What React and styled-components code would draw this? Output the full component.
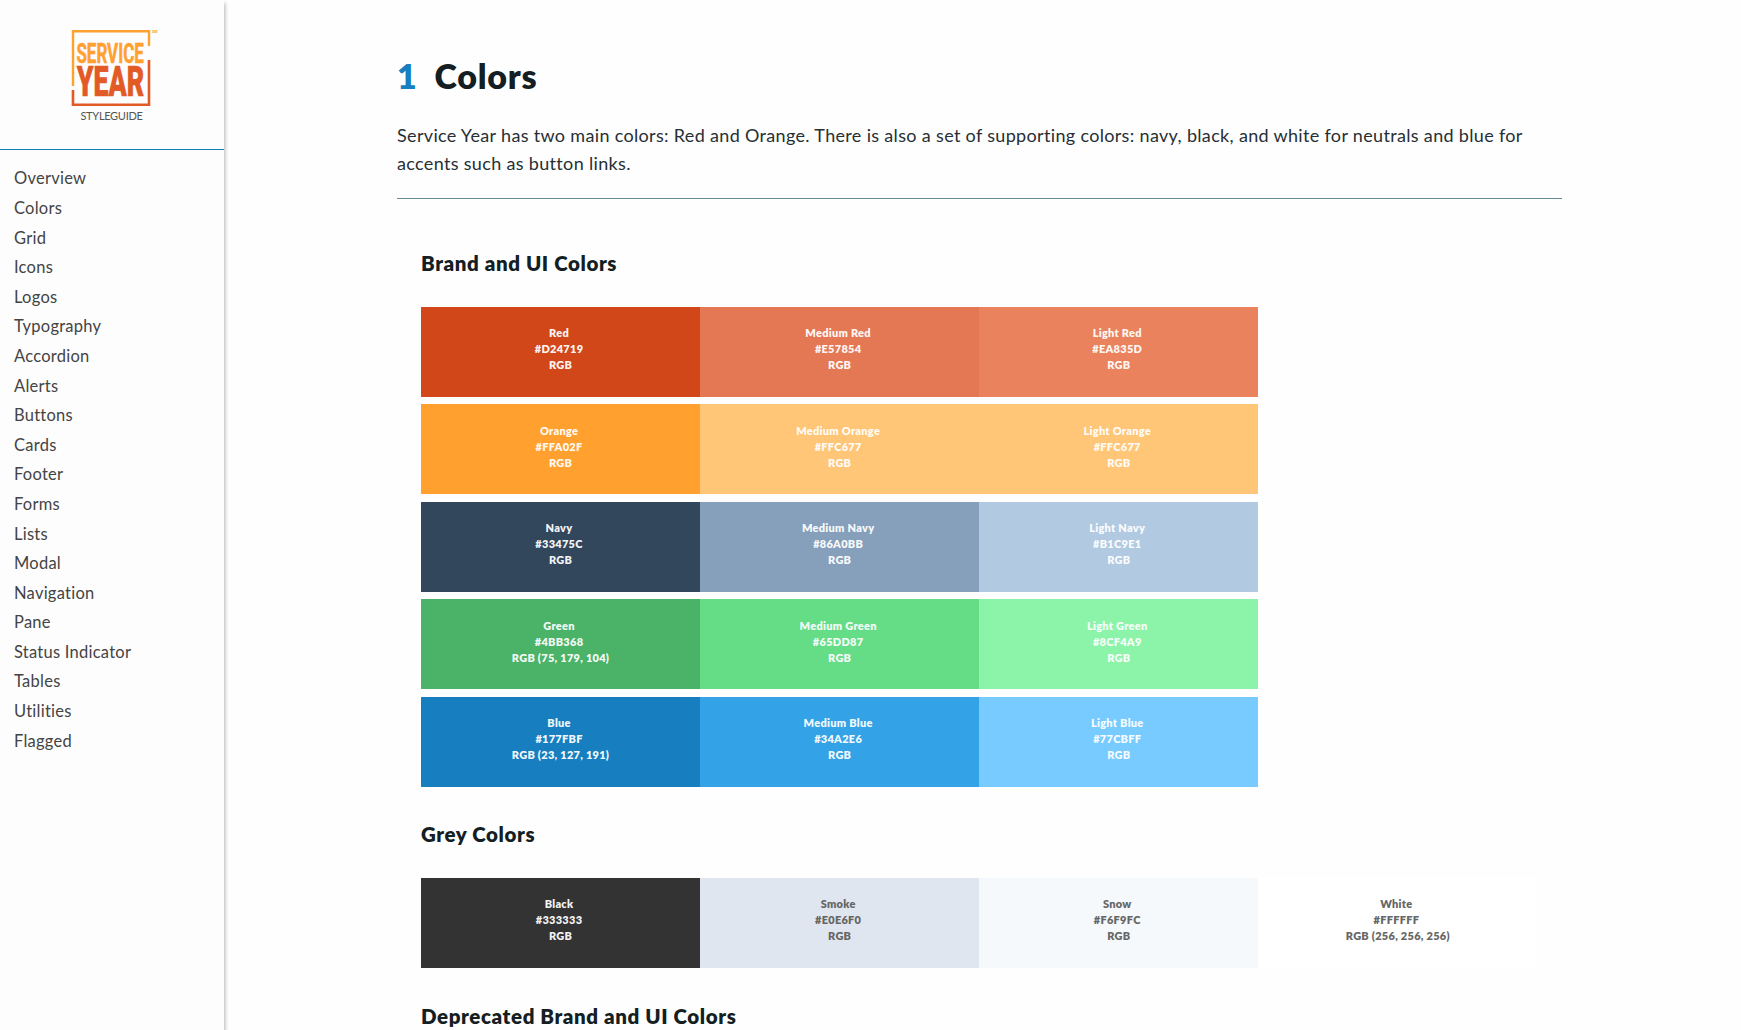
import React from "react";
import styled, { createGlobalStyle } from "styled-components";

const GlobalStyle = createGlobalStyle`
  *, *::before, *::after { box-sizing: border-box; }
  html, body { margin: 0; padding: 0; height: 100%; overflow: hidden; }
  body {
    background: #fefefe;
    color: #141e23;
    font-family: Lato, "Open Sans", sans-serif;
  }
  #root { height: 100%; }
`;

const Page = styled.div`
  display: flex;
  height: 1030px;
  overflow: hidden;
`;

const Sidebar = styled.aside`
  flex: 0 0 224px;
  background: #fdfdfd;
  box-shadow: 1px 3px 4px rgba(0, 0, 0, 0.3);
`;

const Brand = styled.header`
  display: flex;
  flex-direction: column;
  align-items: center;
  height: 150px;
  padding-top: 28px;
  border-bottom: 1px solid #177fbf;
`;

const Logo = styled.svg`
  display: block;
  width: 88px;
  height: 80px;
  margin-left: 4px;
  overflow: visible;
`;

const BrandCaption = styled.span`
  padding-right: 1px;
  font-size: 11px;
  line-height: 16px;
  letter-spacing: -0.3px;
  color: #555;
`;

const Nav = styled.nav`
  display: flex;
  flex-direction: column;
  padding: 14.4px 14px 0;
`;

const NavLink = styled.a`
  height: 29.6px;
  line-height: 29.6px;
  font-size: 16.5px;
  letter-spacing: 0.25px;
  color: #444;
  white-space: nowrap;
`;

const Main = styled.main`
  flex: 1;
  padding: 51px 179px 0 173px;
`;

const Title = styled.h1`
  display: flex;
  gap: 17px;
  margin: 0;
  font-size: 34px;
  line-height: 50px;
  font-weight: 800;
  letter-spacing: 0.75px;
`;

const TitleNumber = styled.span`
  color: #177fbf;
`;

const Intro = styled.p`
  margin: 20px 0 0;
  padding-bottom: 21px;
  border-bottom: 1px solid #668b97;
  font-size: 18px;
  line-height: 28px;
  letter-spacing: 0.33px;
  color: #262f34;
`;

const Section = styled.section`
  padding: 0 24px;
`;

const SectionTitle = styled.h2`
  margin: 0;
  padding-top: ${(p) => p.$top}px;
  font-size: 20.5px;
  line-height: 28px;
  font-weight: 800;
  letter-spacing: 0.6px;
`;

const Palette = styled.div`
  display: flex;
  flex-direction: column;
  gap: 7.5px;
  padding-top: 29.8px;
`;

const SwatchRow = styled.div`
  display: grid;
  grid-template-columns: repeat(4, 279.1px);
  height: 90px;
`;

const Swatch = styled.div`
  display: flex;
  flex-direction: column;
  align-items: center;
  padding-top: 18.4px;
  background: ${(p) => p.$fill};
  color: ${(p) => (p.$dark ? "#666" : "rgba(255, 255, 255, 0.95)")};
  font-size: 11px;
  line-height: 16px;
  font-weight: 800;
  letter-spacing: 0.27px;
`;

const SwatchLabel = styled.span`
  padding-right: 3px;
`;

const navItems = [
  "Overview", "Colors", "Grid", "Icons", "Logos", "Typography", "Accordion",
  "Alerts", "Buttons", "Cards", "Footer", "Forms", "Lists", "Modal",
  "Navigation", "Pane", "Status Indicator", "Tables", "Utilities", "Flagged",
];

const brandRows = [
  [["Red", "#D24719"], ["Medium Red", "#E57854"], ["Light Red", "#EA835D"]],
  [["Orange", "#FFA02F"], ["Medium Orange", "#FFC677"], ["Light Orange", "#FFC677"]],
  [["Navy", "#33475C"], ["Medium Navy", "#86A0BB"], ["Light Navy", "#B1C9E1"]],
  [["Green", "#4BB368", "RGB (75, 179, 104)"], ["Medium Green", "#65DD87"], ["Light Green", "#8CF4A9"]],
  [["Blue", "#177FBF", "RGB (23, 127, 191)"], ["Medium Blue", "#34A2E6"], ["Light Blue", "#77CBFF"]],
];

const greyRows = [
  [
    ["Black", "#333333"],
    ["Smoke", "#E0E6F0", "RGB", true],
    ["Snow", "#F6F9FC", "RGB", true],
    ["White", "#FFFFFF", "RGB (256, 256, 256)", true],
  ],
];

function ColorRows({ rows }) {
  return (
    <Palette>
      {rows.map((row) => (
        <SwatchRow key={row[0][0]}>
          {row.map(([name, hex, rgb = "RGB", dark = false]) => (
            <Swatch key={name} $fill={hex} $dark={dark}>
              <SwatchLabel>{name}</SwatchLabel>
              <SwatchLabel>{hex}</SwatchLabel>
              <span>{rgb}</span>
            </Swatch>
          ))}
        </SwatchRow>
      ))}
    </Palette>
  );
}

function ServiceYearLogo() {
  return (
    <Logo viewBox="70 28 88 80">
      <path d="M73 86V31.3H149V46" fill="none" stroke="#ffa02f" strokeWidth="2.4" />
      <path d="M73 90V104.7H149V60" fill="none" stroke="#e25a26" strokeWidth="2.6" />
      <text x="76.4" y="62.6" fontFamily="Roboto" fontWeight="700" fontSize="27" fill="#ffa02f" stroke="#ffa02f" strokeWidth="0.5" textLength="67.4" lengthAdjust="spacingAndGlyphs">SERVICE</text>
      <text x="76.8" y="95.6" fontFamily="Roboto" fontWeight="900" fontSize="43" fill="#e25a26" stroke="#e25a26" strokeWidth="0.6" textLength="67.4" lengthAdjust="spacingAndGlyphs">YEAR</text>
      <text x="152" y="33" fontFamily="Roboto" fontWeight="700" fontSize="3.6" fill="#ffa02f">SM</text>
    </Logo>
  );
}

export default function App() {
  return (
    <>
      <GlobalStyle />
      <Page>
        <Sidebar>
          <Brand>
            <ServiceYearLogo />
            <BrandCaption>STYLEGUIDE</BrandCaption>
          </Brand>
          <Nav>
            {navItems.map((item) => (
              <NavLink key={item}>{item}</NavLink>
            ))}
          </Nav>
        </Sidebar>
        <Main>
          <Title>
            <TitleNumber>1</TitleNumber>
            Colors
          </Title>
          <Intro>
            Service Year has two main colors: Red and Orange. There is also a set of supporting
            colors: navy, black, and white for neutrals and blue for accents such as button links.
          </Intro>
          <Section>
            <SectionTitle $top={50}>Brand and UI Colors</SectionTitle>
            <ColorRows rows={brandRows} />
            <SectionTitle $top={33.2}>Grey Colors</SectionTitle>
            <ColorRows rows={greyRows} />
            <SectionTitle $top={34.2}>Deprecated Brand and UI Colors</SectionTitle>
          </Section>
        </Main>
      </Page>
    </>
  );
}
